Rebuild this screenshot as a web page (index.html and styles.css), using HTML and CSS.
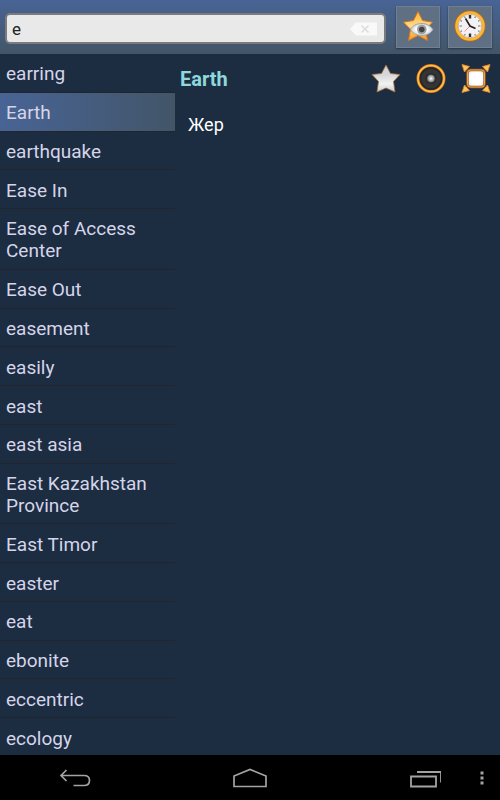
FILE: index.html
```
<!DOCTYPE html>
<html lang="en">
<head>
    <meta charset="UTF-8">
    <meta name="viewport" content="width=device-width, initial-scale=1.0">
    <title>Dictionary</title>
    <link rel="stylesheet" href="styles.css">
</head>
<body>
    <header class="toolbar">
        <form class="search" id="searchForm">
            <input type="text" id="query" name="query" value="e" aria-label="Search word" autocomplete="off">
            <button type="button" class="clear" id="clearButton" aria-label="Clear">
                <svg width="28" height="14" viewBox="0 0 28 14">
                    <path d="M0 7L6 0.5H27V13.5H6Z" fill="#f9f9f9"/>
                    <path d="M11.500 3.500L18.500 10.500M18.500 3.500L11.500 10.500" stroke="#dcdcdc" stroke-width="1.500"/>
                </svg>
            </button>
        </form>
        <button type="button" class="tool" aria-label="Favorites">
            <svg width="32" height="32" viewBox="0 0 32 32">
                <defs>
                    <linearGradient id="gold" x1="0" y1="0" x2="0" y2="1">
                        <stop offset="0" stop-color="#ffb52e"/>
                        <stop offset="0.5" stop-color="#ffd98c"/>
                        <stop offset="1" stop-color="#f79c1c"/>
                    </linearGradient>
                    <radialGradient id="eye">
                        <stop offset="0.5" stop-color="#ffffff"/>
                        <stop offset="1" stop-color="#c4c8cc"/>
                    </radialGradient>
                </defs>
                <path d="M16 1.500L20.500 10.500L30.500 12.200L23.500 19.300L25.500 30.500L16 25.500L6.500 30.500L8.500 19.300L1.500 12.200L11.500 10.500Z" fill="url(#gold)" stroke="#d9781c" stroke-width="1" stroke-linejoin="round"/>
                <path d="M8.500 19.500C11.500 14 17 13.500 20 13.500C24.500 13.500 28.500 15.500 31 19.500C28.500 24 24 25.500 20 25.500C15.500 25.500 11 24 8.500 19.500Z" fill="url(#eye)" stroke="#969a9e" stroke-width="0.800"/>
                <circle cx="19.800" cy="19.500" r="4.800" fill="#9b9fa2"/>
                <circle cx="19.800" cy="19.500" r="2.800" fill="#404447"/>
            </svg>
        </button>
        <button type="button" class="tool" aria-label="History">
            <svg width="32" height="32" viewBox="0 0 32 32">
                <circle cx="16" cy="16" r="14" fill="#f2f2f4" stroke="#b86a10" stroke-width="3"/>
                <circle cx="16" cy="16" r="13.500" fill="none" stroke="#ffb334" stroke-width="2.600"/>
                <circle cx="16" cy="16" r="11.800" fill="none" stroke="#c89656" stroke-width="0.700"/>
                <path d="M16 5V8.500M16 23.500V27" stroke="#333" stroke-width="2.400"/>
                <path d="M5.500 16H8M24 16H26.500M10.500 6.500L11.300 7.900M21.500 6.500L20.700 7.900M6.500 10.500L7.900 11.300M25.500 10.500L24.100 11.300M6.500 21.500L7.900 20.700M25.500 21.500L24.100 20.700M10.500 25.500L11.300 24.100M21.500 25.500L20.700 24.100" stroke="#777" stroke-width="1.200"/>
                <path d="M16 16L10.500 21.500" stroke="#ff8f85" stroke-width="1"/>
                <path d="M11.500 8.500L16 16L21.500 18.500" fill="none" stroke="#222" stroke-width="1.600"/>
            </svg>
        </button>
    </header>

    <main class="content">
        <ul class="words" id="words">
            <li><button type="button">earring</button></li>
            <li><button type="button" class="selected">Earth</button></li>
            <li><button type="button">earthquake</button></li>
            <li><button type="button">Ease In</button></li>
            <li><button type="button">Ease of Access Center</button></li>
            <li><button type="button">Ease Out</button></li>
            <li><button type="button">easement</button></li>
            <li><button type="button">easily</button></li>
            <li><button type="button">east</button></li>
            <li><button type="button">east asia</button></li>
            <li><button type="button">East Kazakhstan Province</button></li>
            <li><button type="button">East Timor</button></li>
            <li><button type="button">easter</button></li>
            <li><button type="button">eat</button></li>
            <li><button type="button">ebonite</button></li>
            <li><button type="button">eccentric</button></li>
            <li><button type="button">ecology</button></li>
        </ul>

        <section class="article">
            <div class="article-header">
                <h1>Earth</h1>
                <button type="button" aria-label="Add to favorites">
                    <svg width="30" height="30" viewBox="0 0 30 30">
                        <defs>
                            <linearGradient id="silver" x1="0" y1="0" x2="0" y2="1">
                                <stop offset="0" stop-color="#d2d4d6"/>
                                <stop offset="0.350" stop-color="#d4d6d8"/>
                                <stop offset="0.700" stop-color="#f2f2f2"/>
                                <stop offset="1" stop-color="#c9cbcd"/>
                            </linearGradient>
                        </defs>
                        <path d="M15 1L19.500 9.500L29 10.500L22.500 17.500L24 28L15 24L6 28L7.500 17.500L1 10.500L10.500 9.500Z" fill="url(#silver)" stroke="#a66d32" stroke-width="0.800" stroke-linejoin="round"/>
                    </svg>
                </button>
                <button type="button" aria-label="Listen">
                    <svg width="30" height="30" viewBox="0 0 30 30">
                        <defs>
                            <radialGradient id="cone">
                                <stop offset="0" stop-color="#ffffff"/>
                                <stop offset="1" stop-color="#77797b"/>
                            </radialGradient>
                        </defs>
                        <circle cx="15" cy="14.500" r="13" fill="#353535" stroke="#d9781c" stroke-width="3"/>
                        <circle cx="15" cy="14.500" r="13" fill="none" stroke="#ffbe48" stroke-width="1.600"/>
                        <circle cx="15" cy="14.500" r="10.500" fill="none" stroke="#262626" stroke-width="1.400"/>
                        <circle cx="15" cy="14.500" r="6" fill="#2e2e2e"/>
                        <circle cx="15" cy="14.500" r="3.800" fill="url(#cone)"/>
                    </svg>
                </button>
                <button type="button" aria-label="Full screen">
                    <svg width="30" height="30" viewBox="0 0 30 30">
                        <defs>
                            <radialGradient id="screen" r="0.700">
                                <stop offset="0.500" stop-color="#ffffff"/>
                                <stop offset="1" stop-color="#d5d5da"/>
                            </radialGradient>
                        </defs>
                        <path d="M1 0.500L8.500 2.500L3.500 8ZM29 0.500L21.500 2.500L26.500 8ZM1 28.500L8.500 26.500L3.500 21ZM29 28.500L21.500 26.500L26.500 21Z" fill="#ffc55c" stroke="#e08a2a" stroke-width="0.900" stroke-linejoin="round"/>
                        <rect x="6.500" y="6" width="17" height="17" rx="3" fill="url(#screen)" stroke="#a85f1c" stroke-width="2.400"/>
                        <rect x="6.500" y="6" width="17" height="17" rx="3" fill="none" stroke="#e9a54e" stroke-width="1"/>
                    </svg>
                </button>
            </div>
            <p lang="kk">Жер</p>
        </section>
    </main>

    <nav class="system-bar">
        <button type="button" aria-label="Back">
            <svg width="32" height="20" viewBox="0 0 32 20">
                <path d="M7.500 2L2 7.500L7.500 13M2 7.500H25Q30.500 7.500 30.500 12.500Q30.500 17.500 25 17.500H14.500" fill="none" stroke="#a3a3a3" stroke-width="1.700"/>
            </svg>
        </button>
        <button type="button" aria-label="Home">
            <svg width="36" height="20" viewBox="0 0 36 20">
                <path d="M2 18.500V8L18 1.500L34 8V18.500Z" fill="none" stroke="#a3a3a3" stroke-width="1.700"/>
            </svg>
        </button>
        <button type="button" aria-label="Recent apps">
            <svg width="32" height="20" viewBox="0 0 32 20">
                <path d="M2 8.500H27V18.500H2ZM8 4H32V14.500" fill="none" stroke="#a3a3a3" stroke-width="1.800"/>
            </svg>
        </button>
        <button type="button" class="more" aria-label="More options">
            <svg width="4" height="14" viewBox="0 0 4 14">
                <path d="M0.500 0.500H3.500V3.500H0.500ZM0.500 5.500H3.500V8.500H0.500ZM0.500 10.500H3.500V13.500H0.500Z" fill="#a3a3a3"/>
            </svg>
        </button>
    </nav>

    <script>
        const query = document.getElementById("query");
        const words = document.getElementById("words");

        document.getElementById("clearButton").addEventListener("click", function() {
            query.value = "";
            query.focus();
        });

        document.getElementById("searchForm").addEventListener("submit", function(e) {
            e.preventDefault();
        });

        words.addEventListener("click", function(e) {
            if (e.target.tagName !== "BUTTON") {
                return;
            }
            words.querySelector(".selected").classList.remove("selected");
            e.target.classList.add("selected");
        });
    </script>
</body>
</html>
```
FILE: styles.css
```
* {
    box-sizing: border-box;
}

body {
    display: flex;
    flex-direction: column;
    height: 100vh;
    margin: 0;
    font-family: Roboto, sans-serif;
    background-color: #1c2c41;
    color: #fff;
}

button {
    display: flex;
    align-items: center;
    justify-content: center;
    padding: 0;
    border: none;
    background: none;
    color: inherit;
    font: inherit;
    cursor: pointer;
}

/* Search bar */
.toolbar {
    display: flex;
    align-items: center;
    gap: 8px;
    height: 54px;
    padding: 0 8px 1px 5px;
    background: linear-gradient(#486495, #425568);
}

.search {
    display: flex;
    flex: 1;
    height: 31px;
    margin: 4px 2px 0 0;
    padding: 0 6px 0 5px;
    border: 2px solid #7b7b7d;
    border-radius: 5px;
    background-color: #e9e9e9;
}

.search input {
    flex: 1;
    min-width: 0;
    padding: 0;
    border: none;
    outline: none;
    background: none;
    color: #222;
    font-family: inherit;
    font-size: 17px;
}

.tool {
    width: 44px;
    height: 42px;
    padding-bottom: 2px;
    border: 1px solid #718091;
    background-color: #5f7084;
    box-shadow: 0 1px 2px rgba(0, 0, 0, 0.4);
}

/* Word list and article */
.content {
    display: flex;
    flex: 1;
    min-height: 0;
    overflow: hidden;
}

.words {
    display: flex;
    flex-direction: column;
    width: 35%;
    margin: 0 0 -2px;
    padding: 0;
    list-style: none;
}

.words li {
    display: flex;
    flex: 1 0 auto;
    border-bottom: 1px solid #22252c;
}

.words button {
    flex: 1;
    justify-content: flex-start;
    padding: 9px 6px 6px;
    color: #d5d5e9;
    font-size: 19px;
    line-height: 22px;
    text-align: left;
}

.words .selected {
    background: linear-gradient(to right, #486495, #425568);
}

.article {
    flex: 1;
    padding: 0 9px 0 5px;
}

.article-header {
    display: flex;
    align-items: center;
    gap: 15px;
    height: 49px;
}

.article h1 {
    flex: 1;
    margin: 0;
    color: #8ed8dc;
    font-size: 20px;
    line-height: 24px;
}

.article p {
    margin: 10px 8px;
    font-size: 18px;
    line-height: 24px;
}

/* System navigation */
.system-bar {
    display: grid;
    grid-template-columns: 150px 1fr 150px;
    align-items: center;
    position: relative;
    height: 45px;
    background-color: #000;
}

.system-bar button {
    height: 100%;
}

.system-bar .more {
    position: absolute;
    right: 8px;
    width: 20px;
}
```
